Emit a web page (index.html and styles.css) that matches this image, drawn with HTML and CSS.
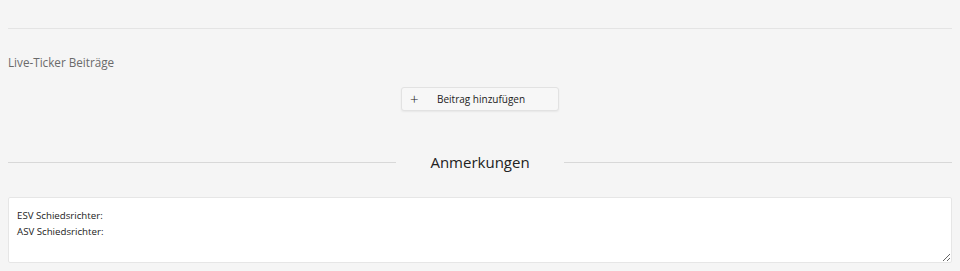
FILE: index.html
```html
<!DOCTYPE html>
<html lang="de">
<head>
    <meta charset="UTF-8">
    <meta name="viewport" content="width=device-width, initial-scale=1.0">
    <title>Spielbericht</title>
    <link rel="stylesheet" href="styles.css">
</head>
<body>
    <div class="page">
        <hr class="rule">

        <div class="ticker">
            <label class="ticker-label">Live-Ticker Beiträge</label>
            <div class="ticker-actions">
                <button class="add-btn" type="button"><span class="plus">+</span>Beitrag hinzufügen</button>
            </div>
        </div>

        <div class="section-title">
            <span class="line"></span>
            <h2>Anmerkungen</h2>
            <span class="line"></span>
        </div>

        <textarea class="notes">ESV Schiedsrichter:
ASV Schiedsrichter:</textarea>
    </div>
</body>
</html>
```

FILE: styles.css
```css
body {
    margin: 0;
    background-color: #f5f5f5;
    font-family: "Open Sans", "Noto Sans", sans-serif;
    color: #333;
}

.page {
    padding: 0 8px;
}

.rule {
    margin: 0;
    padding-top: 28px;
    border: none;
    border-bottom: 1px solid #e4e4e4;
}

.ticker {
    padding-top: 25px;
}

.ticker-label {
    display: block;
    font-size: 11.7px;
    line-height: 16px;
    color: #6a6a6a;
}

.ticker-actions {
    display: flex;
    justify-content: center;
    padding-top: 17px;
}

.add-btn {
    display: flex;
    align-items: center;
    width: 158px;
    height: 24px;
    padding: 0 0 0 8px;
    font-family: inherit;
    font-size: 10px;
    color: #222;
    background-color: #f7f7f7;
    border: 1px solid #e2e2e2;
    border-radius: 3px;
    box-shadow: 0 1px 2px rgba(0, 0, 0, 0.06);
    cursor: pointer;
}

.plus {
    width: 27px;
    text-align: left;
    font-size: 15px;
    font-weight: 300;
    line-height: 1;
}

.section-title {
    display: flex;
    align-items: center;
    gap: 34px;
    margin-top: 40px;
}

.section-title .line {
    flex: 1;
    border-top: 1px solid #d8d8d8;
}

.section-title h2 {
    margin: 0;
    font-size: 15px;
    font-weight: 400;
    line-height: 22px;
    color: #222;
}

.notes {
    display: block;
    box-sizing: border-box;
    width: 100%;
    height: 66px;
    margin-top: 24px;
    padding: 10px 8px 8px;
    font-family: inherit;
    font-size: 9.7px;
    line-height: 16px;
    color: #222;
    background-color: #fff;
    border: 1px solid #e6e6e6;
    border-radius: 2px;
    outline: none;
}
```
